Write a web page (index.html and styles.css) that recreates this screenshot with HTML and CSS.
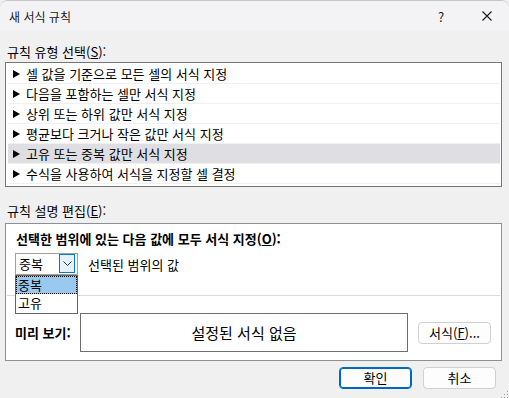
FILE: index.html
```html
<!DOCTYPE html>
<html lang="ko">
<head>
  <meta charset="UTF-8">
  <title>새 서식 규칙</title>
  <link rel="stylesheet" href="styles.css">
</head>
<body>
  <div class="window">
    <div class="titlebar">
      <span class="title">새 서식 규칙</span>
      <span class="caption-btn">?</span>
      <span class="caption-btn">
        <svg width="10" height="10" viewBox="0 0 10 10"><path d="M0.5 0.5 L9.5 9.5 M9.5 0.5 L0.5 9.5" stroke="#1a1a1a" stroke-width="1.1" fill="none"/></svg>
      </span>
    </div>

    <div class="content">
      <div class="label">규칙 유형 선택(<u>S</u>):</div>
      <div class="listbox">
        <div class="row">셀 값을 기준으로 모든 셀의 서식 지정</div>
        <div class="row">다음을 포함하는 셀만 서식 지정</div>
        <div class="row">상위 또는 하위 값만 서식 지정</div>
        <div class="row">평균보다 크거나 작은 값만 서식 지정</div>
        <div class="row selected">고유 또는 중복 값만 서식 지정</div>
        <div class="row">수식을 사용하여 서식을 지정할 셀 결정</div>
      </div>

      <div class="label label-edit">규칙 설명 편집(<u>E</u>):</div>
      <div class="panel">
        <div class="panel-top">
          <div class="heading">선택한 범위에 있는 다음 값에 모두 서식 지정(<u>O</u>):</div>
          <div class="select-row">
            <div class="combo">
              <span class="combo-text">중복</span>
              <span class="combo-btn">
                <svg width="9" height="5" viewBox="0 0 9 5"><path d="M0.5 0.5 L4.5 4.5 L8.5 0.5" stroke="#333" stroke-width="1" fill="none"/></svg>
              </span>
              <div class="dropdown">
                <div class="option active">중복</div>
                <div class="option">고유</div>
              </div>
            </div>
            <span class="combo-note">선택된 범위의 값</span>
          </div>
        </div>
        <div class="preview-row">
          <span class="preview-label">미리 보기:</span>
          <div class="preview-box">설정된 서식 없음</div>
          <button class="btn">서식(<u>F</u>)...</button>
        </div>
      </div>

      <div class="footer">
        <button class="btn btn-default">확인</button>
        <button class="btn">취소</button>
      </div>
    </div>

    <svg class="grip" width="8" height="8" viewBox="0 0 8 8">
      <rect x="6" y="0" width="1" height="1" fill="#999"/>
      <rect x="3" y="3" width="1" height="1" fill="#999"/>
      <rect x="6" y="3" width="1" height="1" fill="#999"/>
      <rect x="0" y="6" width="1" height="1" fill="#999"/>
      <rect x="3" y="6" width="1" height="1" fill="#999"/>
      <rect x="6" y="6" width="1" height="1" fill="#999"/>
    </svg>
  </div>
</body>
</html>
```

FILE: styles.css
```css
/* Page */
body {
  margin: 0;
  font-family: "Noto Sans CJK KR", "Noto Sans", sans-serif;
  font-size: 13px;
  color: #000;
  background: #f0f0f0;
}

/* Dialog window */
.window {
  position: relative;
  height: 398px;
  background: #f0f0f0;
  border-top: 1px solid #c6c6c6;
  border-radius: 8px 8px 0 0;
  overflow: hidden;
}

.titlebar {
  display: flex;
  align-items: center;
  height: 30px;
  padding-left: 9px;
  background: #f3f3f5;
  font-size: 12px;
  color: #1a1a1a;
}

.title {
  flex: 1;
}

.caption-btn {
  width: 46px;
  height: 30px;
  display: flex;
  align-items: center;
  justify-content: center;
  font-size: 13px;
}

.caption-btn:last-child {
  width: 45px;
}

/* Body */
.content {
  padding: 13px 7px 0 5px;
}

.label {
  height: 16px;
  line-height: 16px;
  margin-left: 2px;
}

.label-edit {
  margin-top: 16px;
}

/* Rule type list */
.listbox {
  margin-top: 2px;
  height: 125px;
  box-sizing: border-box;
  border: 1px solid #767676;
  background: #fff;
  padding: 1px 1px 2px 2px;
}

.row {
  position: relative;
  height: 20px;
  line-height: 19px;
  box-sizing: border-box;
  border-bottom: 1px solid #f0f0f0;
  padding-left: 18px;
}

.row::before {
  content: "";
  position: absolute;
  left: 5px;
  top: 6px;
  border-left: 7px solid #000;
  border-top: 4px solid transparent;
  border-bottom: 4px solid transparent;
}

.row.selected {
  background: #dedee3;
}

/* Rule description panel */
.panel {
  margin-top: 4px;
  height: 138px;
  box-sizing: border-box;
  border: 1px solid #8a9099;
  background: #fff;
}

.panel-top {
  height: 72px;
  box-sizing: content-box;
  padding: 7px 9px 0 9px;
  margin: 0 1px;
  border-bottom: 1px solid #dadada;
  box-sizing: border-box;
}

.heading {
  height: 16px;
  line-height: 16px;
  font-weight: bold;
}

.select-row {
  display: flex;
  align-items: center;
  margin-top: 6px;
  margin-left: -1px;
}

.combo {
  position: relative;
  display: flex;
  width: 63px;
  height: 22px;
  box-sizing: border-box;
  border: 1px solid #a0a0a0;
  padding: 0 2px 0 3px;
  background: #fff;
}

.combo-text {
  flex: 1;
  line-height: 19px;
}

.combo-btn {
  width: 16px;
  height: 19px;
  box-sizing: border-box;
  border: 1px solid #0078d7;
  background: #e5f1fb;
  display: flex;
  align-items: center;
  justify-content: center;
}

.combo-note {
  margin-left: 10px;
}

.dropdown {
  position: absolute;
  left: -1px;
  top: 21px;
  width: 63px;
  box-sizing: border-box;
  border: 1px solid #646464;
  background: #fff;
  z-index: 2;
}

.option {
  height: 19px;
  line-height: 17px;
  padding-left: 2px;
  box-sizing: border-box;
}

.option.active {
  height: 18px;
  background: #99c9ef;
  border: 1px dotted #000;
  padding-left: 1px;
  line-height: 15px;
}

.preview-row {
  display: flex;
  align-items: center;
  padding: 17px 0 0 9px;
}

.preview-label {
  width: 65px;
  font-weight: bold;
}

.preview-box {
  width: 328px;
  height: 39px;
  box-sizing: border-box;
  border: 1px solid #6e6e6e;
  display: flex;
  align-items: center;
  justify-content: center;
  font-size: 15px;
  margin-right: 10px;
}

/* Buttons */
.btn {
  width: 73px;
  height: 22px;
  box-sizing: border-box;
  border: 1px solid #d0d0d0;
  border-radius: 4px;
  background: #fdfdfd;
  font-family: inherit;
  font-size: 13px;
  color: #000;
  padding: 0;
  line-height: 18px;
}

.btn-default {
  border: 1px solid #0067c0;
  box-shadow: inset 0 0 0 1px #0067c0;
}

.footer {
  display: flex;
  justify-content: flex-end;
  gap: 11px;
  margin-top: 6px;
  margin-right: 6px;
}

.grip {
  position: absolute;
  right: 0;
  bottom: 0;
}
```
